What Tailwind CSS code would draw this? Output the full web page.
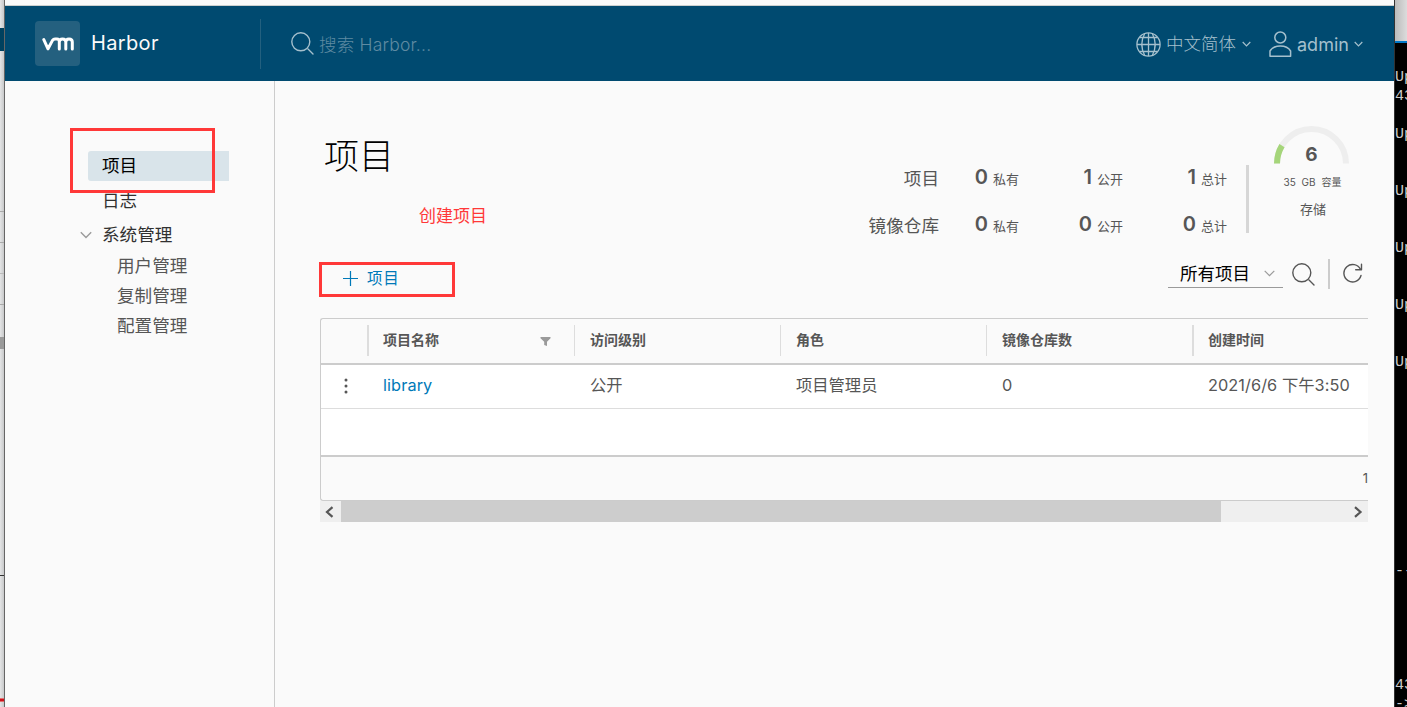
<!doctype html>
<html lang="zh-CN">
  <head>
    <meta charset="UTF-8" />
    <meta name="viewport" content="width=device-width, initial-scale=1.0" />
    <title>Harbor</title>
    <script src="https://cdn.jsdelivr.net/npm/@tailwindcss/browser@4"></script>
  </head>
  <body
    class="relative flex h-[707px] w-[1407px] overflow-hidden bg-[#fafafa] font-['Inter','Noto_Sans_CJK_SC',sans-serif] text-[#565656]"
  >
    <!-- window behind, left edge -->
    <div class="flex w-[5px] shrink-0 flex-col border-r border-[#666] bg-linear-to-r from-[#e4e5e6] to-[#c8c9ca]">
      <div class="h-[28px]"></div>
      <div class="h-[23px] bg-[#00415f]"></div>
      <div class="h-[161px] border-b border-[#aaa]"></div>
      <div class="h-[31px] border-b border-[#aaa]"></div>
      <div class="h-[31px] border-b border-[#bbb]"></div>
      <div class="h-[31px] border-b border-[#aaa]"></div>
      <div class="h-[32px]"></div>
      <div class="h-[12px] bg-[#9a9a9a]"></div>
      <div class="h-[227px] border-b border-[#333]"></div>
      <div class="h-[122px]"></div>
      <div class="h-[4px] border-y border-[#e07070] bg-[#d0111b]"></div>
    </div>

    <div class="flex w-[1389px] shrink-0 flex-col">
      <div class="h-[6px] shrink-0 border-b border-[#ccd0d0] bg-[#f9fafb]"></div>

      <header class="flex h-[75px] shrink-0 items-center bg-[#004a70] pr-[31px]">
        <div class="ml-[30px] flex size-[45px] items-center justify-center rounded bg-[#24607f]">
          <svg class="h-[14px] w-[32px]" viewBox="0 0 32 14" fill="none" stroke="#fff" stroke-width="3" stroke-linecap="round" stroke-linejoin="round">
            <path d="M1.800 2.600 6 11.800 10.500 3.400Q11.500 1.900 13 1.900H15Q17.300 1.900 17.300 4.500V12M17.300 5Q17.300 1.900 20.500 1.900 23.800 1.900 23.800 5V12M23.800 5Q23.800 1.900 27 1.900 30.300 1.900 30.300 5V12" />
          </svg>
        </div>
        <span class="-mt-[2px] ml-[11px] w-[169px] text-[20px] tracking-[0.35px] text-[#fafafa]">Harbor</span>
        <div class="flex h-[50px] items-center border-l border-[#23607f] pl-[30px]">
          <svg class="size-[23px]" viewBox="0 0 23 23" fill="none" stroke="#a5c0cd" stroke-width="1.4" stroke-linecap="round">
            <circle cx="9.8" cy="9.8" r="9" />
            <path d="m17 17 5 5" />
          </svg>
          <span class="mt-[3px] ml-[5px] text-[17.5px] font-light tracking-[0.2px] text-[#5f8ba2]">搜索 Harbor...</span>
        </div>

        <div class="ml-auto flex items-center text-[17.5px] text-[#a5c0cd]">
          <svg class="mt-px size-[25px]" viewBox="0 0 25 25" fill="none" stroke="currentColor" stroke-width="1.3">
            <circle cx="12.5" cy="12.5" r="11.6" />
            <path d="M12.5 1v23M1 12.5h23M3.8 5.5h17.4M3.8 19.5h17.4M8.7 1.5c-3.7 7-3.7 15 0 22M16.3 1.5c3.7 7 3.7 15 0 22" />
          </svg>
          <span class="mt-[2px] ml-[5px] font-light">中文简体</span>
          <svg class="mt-px ml-[6px] h-[6px] w-[9px]" viewBox="0 0 9 6" fill="none" stroke="currentColor" stroke-width="1.2"><path d="m.7 1 3.8 3.8L8.3 1" /></svg>
          <svg class="mt-[2px] ml-[18px] h-[27px] w-[23px]" viewBox="0 0 23 27" fill="none" stroke="currentColor" stroke-width="1.5">
            <circle cx="11.3" cy="6.5" r="5.5" />
            <path d="M1 25.3V20c2-3.300 6-5 10.300-5s8.300 1.700 10.300 5v5.300z" stroke-linejoin="round" />
          </svg>
          <span class="mt-px ml-[5px] w-[52px] text-[18px]">admin</span>
          <svg class="mt-px ml-[5px] h-[6px] w-[9px]" viewBox="0 0 9 6" fill="none" stroke="currentColor" stroke-width="1.2"><path d="m.7 1 3.8 3.8L8.3 1" /></svg>
        </div>
      </header>

      <div class="flex min-h-0 flex-1">
        <nav class="w-[270px] shrink-0 border-r border-[#ccc] pt-[70px] text-[17.6px]">
          <a class="ml-[83px] block h-[30px] w-[141px] rounded-l-[3px] bg-[#d9e4ea] pl-[14px] leading-[30px] text-black">项目</a>
          <a class="mt-[4px] ml-[97px] block h-[30px] leading-[32px] text-[#313131]">日志</a>
          <div class="mt-[5px] flex h-[30px] items-center pl-[75px] text-[#313131]">
            <svg class="mr-[10px] h-[8px] w-[12px]" viewBox="0 0 12 8" fill="none" stroke="#9a9a9a" stroke-width="1.4"><path d="m.8 1.300 5.200 5.200 5.200-5.200" /></svg>
            <span class="leading-[32px]">系统管理</span>
          </div>
          <a class="ml-[112px] block h-[30px] leading-[32px]">用户管理</a>
          <a class="ml-[112px] block h-[30px] leading-[32px]">复制管理</a>
          <a class="ml-[112px] block h-[30px] leading-[32px]">配置管理</a>
        </nav>

        <main class="flex w-[1119px] flex-col pr-[26px] pl-[45px]">
          <div class="flex h-[178px] shrink-0 pt-[45px]">
            <h1 class="ml-[4px] h-[60px] text-[35px] leading-[60px] font-light text-black">项目</h1>

            <div class="mt-[29px] ml-auto grid h-[94px] grid-cols-[80px_80px_104px_104px] grid-rows-[47px_47px] text-right text-[13px] leading-[45px]">
              <span class="text-[17.6px] leading-[48px]">项目</span>
              <span><b class="mr-[5px] text-[20px] font-semibold">0</b>私有</span>
              <span><b class="mr-[5px] text-[20px] font-semibold">1</b>公开</span>
              <span><b class="mr-[5px] text-[20px] font-semibold">1</b>总计</span>
              <span class="text-[17.6px] leading-[48px] whitespace-nowrap">镜像仓库</span>
              <span><b class="mr-[5px] text-[20px] font-semibold">0</b>私有</span>
              <span><b class="mr-[5px] text-[20px] font-semibold">0</b>公开</span>
              <span><b class="mr-[5px] text-[20px] font-semibold">0</b>总计</span>
            </div>
            <div class="mt-[39px] ml-[19px] h-[68px] w-[3px] bg-[#d6d6d6]"></div>
            <div class="mr-[19px] ml-[25px] flex w-[75px] flex-col items-center whitespace-nowrap">
              <svg class="h-[38px] w-[75px] shrink-0" viewBox="0 0 75 38" fill="none" stroke-width="6">
                <path d="M3 37.500a34.500 34.500 0 0 1 69 0" stroke="#eee" />
                <path d="M3 37.500a34.500 34.500 0 0 1 5-17.900" stroke="#a5d57a" />
              </svg>
              <b class="-mt-[19px] text-[19px] leading-[20px]">6</b>
              <span class="mt-[9px] ml-[2px] text-[10px] leading-[16px] [word-spacing:3px]">35 GB 容量</span>
              <span class="mt-[10px] ml-[3px] text-[13px] leading-[18px]">存储</span>
            </div>
          </div>

          <div class="flex h-[30px] shrink-0 items-center">
            <a class="mt-[8px] ml-[23px] flex items-center text-[15.5px] leading-[20px] tracking-[0.7px] text-[#0079b8]">
              <svg class="mr-[9px] size-[15px]" viewBox="0 0 15 15" stroke="currentColor" stroke-width="1.2"><path d="M7.500 0v15M0 7.500h15" /></svg>
              <span class="mt-[2px]">项目</span>
            </a>
            <div class="-mt-px ml-auto flex h-[29px] w-[115px] items-center border-b border-[#9a9a9a] pl-[12px] text-[17.5px] text-black">
              <span class="mt-[2px]">所有项目</span>
              <svg class="ml-[14px] h-[7px] w-[11px]" viewBox="0 0 11 7" fill="none" stroke="#9a9a9a" stroke-width="1.2"><path d="m.7.900 4.800 4.800L10.300.900" /></svg>
            </div>
            <svg class="ml-[9px] size-[23px]" viewBox="0 0 23 23" fill="none" stroke="#565656" stroke-width="1.4" stroke-linecap="round">
              <circle cx="9.800" cy="9.800" r="9" />
              <path d="m17 17 5 5" />
            </svg>
            <div class="ml-[13px] h-[30px] w-[2px] bg-[#ccc]"></div>
            <svg class="-mt-[2px] mr-[5px] ml-[13px] size-[20px]" viewBox="0 0 20 20" fill="none" stroke="#565656" stroke-width="1.4" stroke-linecap="round" stroke-linejoin="round">
              <path d="M18 12.500A8.700 8.700 0 1 1 17.500 6.500M18.500 1.200v5.500h-5.800" />
            </svg>
          </div>

          <div class="mt-[29px] w-[1048px] overflow-hidden rounded-l-[3px] border-y border-l border-[#ccc]">
            <div class="grid h-[44px] grid-cols-[46px_207px_206px_206px_206px_176px] pt-[6px] text-[14px] leading-[29px] font-bold">
              <span></span>
              <span class="flex h-[31px] justify-between border-l-2 border-[#ddd] pr-[23px] pl-[14px]">
                项目名称
                <svg class="mt-[12px] h-[9px] w-[11px]" viewBox="0 0 11 9" fill="#9a9a9a"><path d="M.500 0h10v1.200L7 4.800V9L4.200 8V4.800L.500 1.200z" /></svg>
              </span>
              <span class="h-[31px] border-l border-[#ddd] pl-[15px]">访问级别</span>
              <span class="h-[31px] border-l border-[#ddd] pl-[15px]">角色</span>
              <span class="h-[31px] border-l border-[#ddd] pl-[15px]">镜像仓库数</span>
              <span class="h-[31px] border-l-2 border-[#ddd] pl-[14px]">创建时间</span>
            </div>
            <div class="h-[94px] border-y-2 border-[#ccc] bg-white">
              <div class="grid h-[44px] grid-cols-[46px_207px_206px_206px_206px_176px] border-b border-[#ddd] text-[16.3px] leading-[40px] whitespace-nowrap">
                <svg class="mt-[13px] ml-[23px] h-[16px] w-[4px]" viewBox="0 0 4 16" fill="#565656"><circle cx="2" cy="2" r="1.500" /><circle cx="2" cy="8" r="1.500" /><circle cx="2" cy="14" r="1.500" /></svg>
                <a class="pl-[16px] tracking-[0.1px] text-[#0079b8]">library</a>
                <span class="pl-[16px]">公开</span>
                <span class="pl-[16px]">项目管理员</span>
                <span class="pl-[16px]">0</span>
                <span class="pl-[16px] tracking-[0.07px]">2021/6/6 下午3:50</span>
              </div>
            </div>
            <div class="flex h-[43px] items-center justify-end">
              <span class="text-[13px]">1</span>
            </div>
          </div>
          <div class="flex h-[21px] w-[1048px] items-center bg-[#efefef]">
            <svg class="mr-[6px] ml-[4px] h-[12px] w-[11px]" viewBox="0 0 11 12" fill="none" stroke="#565656" stroke-width="2.200"><path d="M8.500 1.200 3 6l5.500 4.800" /></svg>
            <div class="h-[21px] w-[880px] bg-[#cdcdcd]"></div>
            <svg class="mr-[4px] ml-auto h-[12px] w-[11px]" viewBox="0 0 11 12" fill="none" stroke="#565656" stroke-width="2.200"><path d="M2 1.200 7.500 6 2 10.800" /></svg>
          </div>
        </main>
      </div>
    </div>

    <!-- terminal behind, right edge -->
    <div class="flex w-[13px] shrink-0 flex-col overflow-hidden border-l border-[#333] bg-black">
      <div class="h-[43px] shrink-0 border-b-2 border-[#0078c8] bg-linear-to-r from-[#bbb] to-[#dcdcdc]"></div>
      <pre class="mt-[25px] font-['Liberation_Mono',monospace] text-[15px] leading-[19px] text-[#ccc]">
Up
43

Up


Up


Up


Up


Up










--





43
-></pre>
    </div>

    <!-- annotations -->
    <div class="absolute top-[128px] left-[70px] h-[65px] w-[145px] border-3 border-[#ff3838]"></div>
    <div class="absolute top-[262px] left-[319px] h-[35px] w-[136px] border-3 border-[#ff3838]"></div>
    <span class="absolute top-[204px] left-[419px] text-[17px] leading-[24px] text-[#ff3838]">创建项目</span>
  </body>
</html>
